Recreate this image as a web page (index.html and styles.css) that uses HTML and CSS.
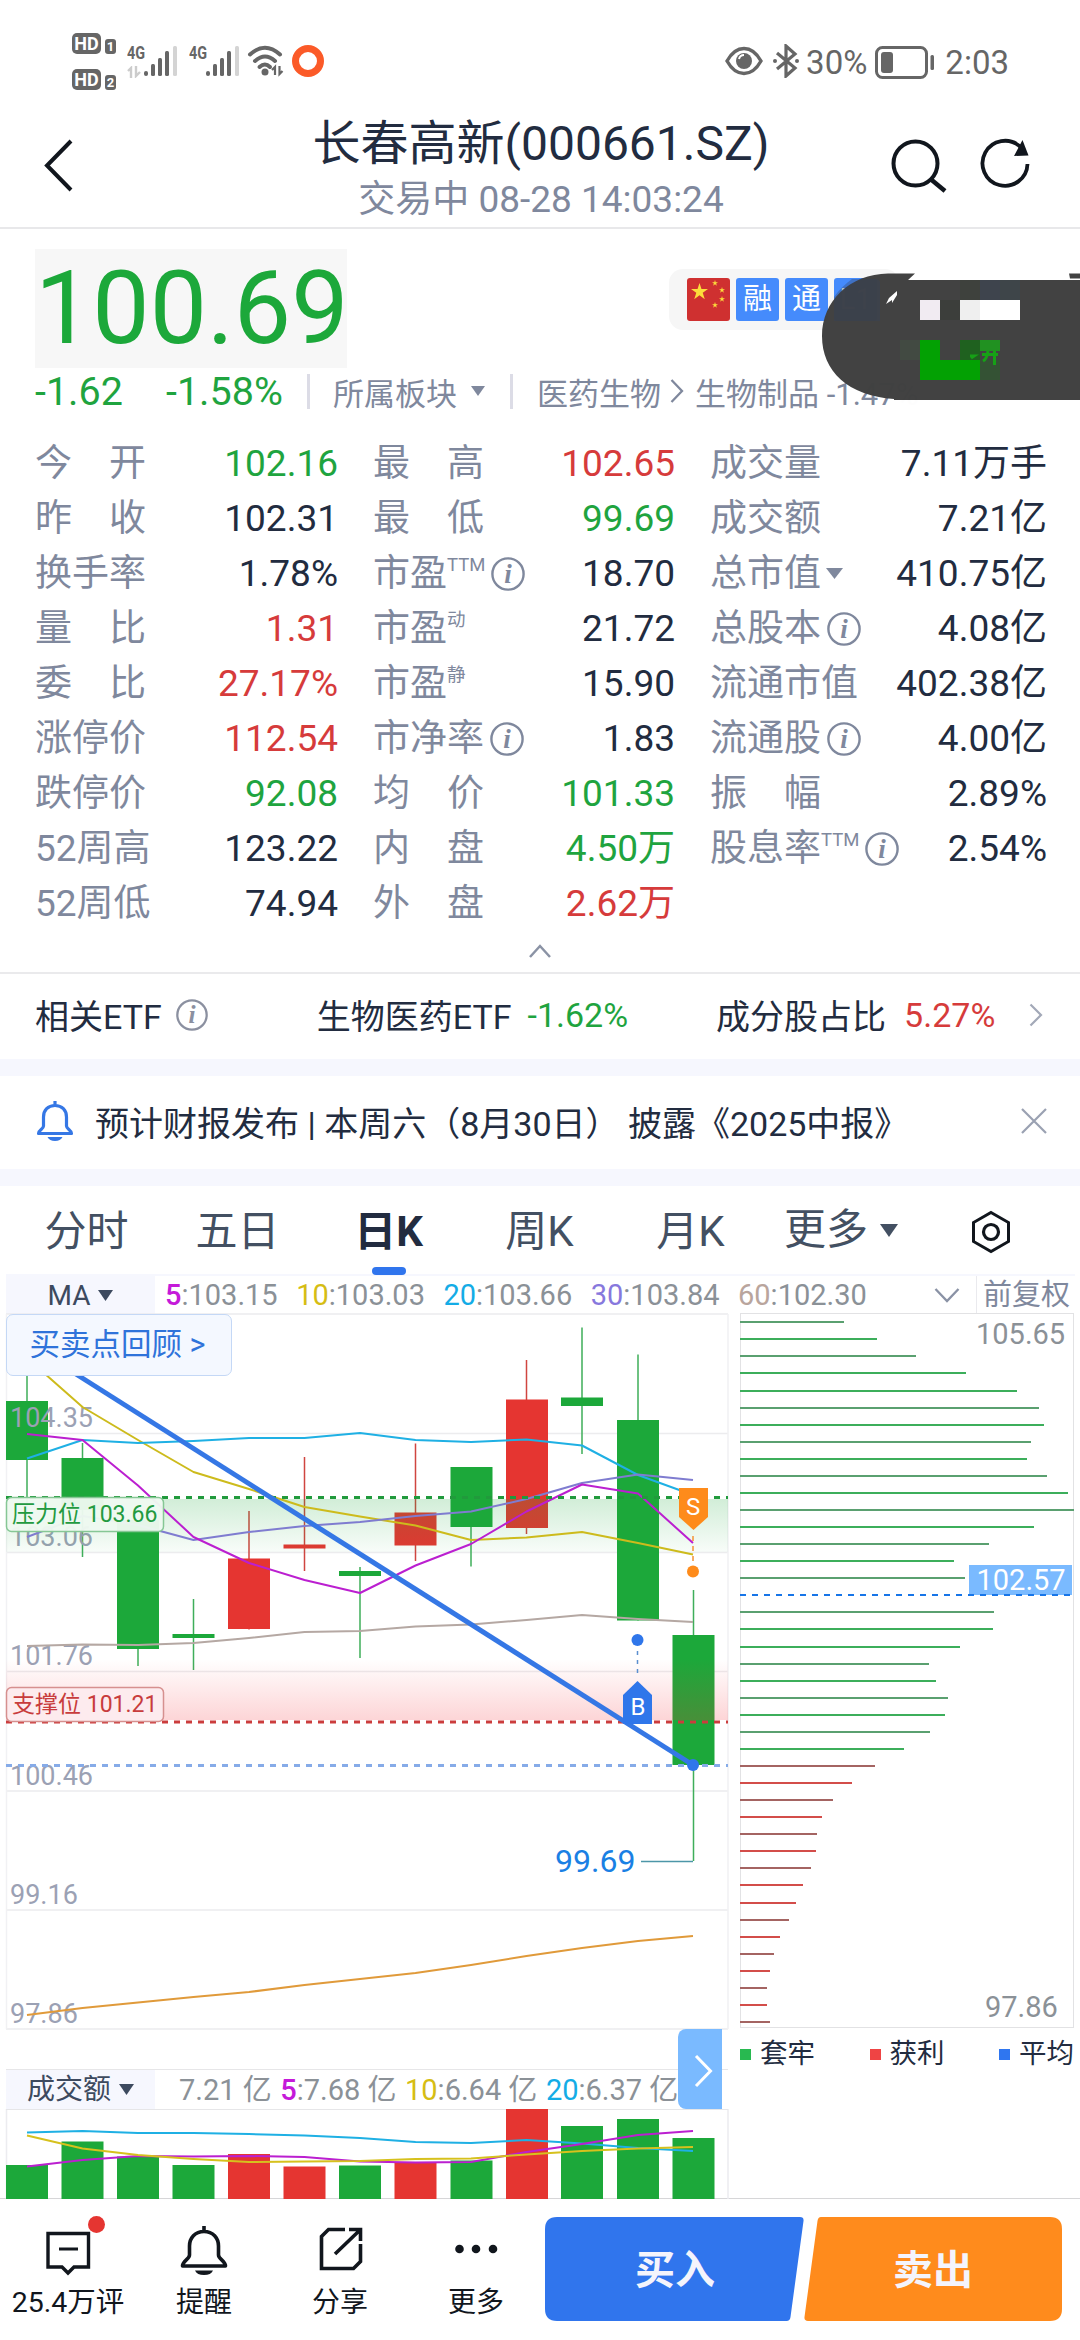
FILE: index.html
```html
<!DOCTYPE html>
<html lang="zh-CN">
<head>
<meta charset="utf-8">
<title>长春高新(000661.SZ)</title>
<link rel="stylesheet" href="styles.css">
</head>
<body>
<svg class="defs" width="0" height="0">
  <symbol id="info" viewBox="0 0 34 34">
    <circle cx="17" cy="17" r="15.6" fill="none" stroke="currentColor" stroke-width="2.4"/>
    <text x="17" y="26" text-anchor="middle" class="info-i">i</text>
  </symbol>
  <symbol id="signal" viewBox="0 0 34 32">
    <g fill="#666">
      <rect x="0" y="25" width="4" height="5" rx="2"/>
      <rect x="7" y="18" width="4" height="12" rx="1.5"/>
      <rect x="14" y="12" width="4" height="18" rx="1.5"/>
      <rect x="21" y="5" width="4" height="25" rx="1.5"/>
      <rect x="29" y="0" width="4" height="30" rx="1.5" fill="#d4d4d4"/>
    </g>
  </symbol>
  <symbol id="star" viewBox="0 0 20 20">
    <path d="M10 0l2.3 7.2H20l-6.2 4.4 2.4 7.4-6.2-4.6L3.8 19l2.4-7.4L0 7.2h7.7z" fill="#fcdc3b"/>
  </symbol>
</svg>

<header>
  <div class="status">
    <div class="status-left">
      <div class="hd">
        <div><b>HD</b><i>1</i></div>
        <div><b>HD</b><i>2</i></div>
      </div>
      <div class="cell"><span>4G</span><svg class="updown" width="14" height="12" viewBox="0 0 14 12"><path d="M4 12V2L1 5M9 0v10l4-4" fill="none" stroke="#ccc" stroke-width="2.4"/></svg><svg width="34" height="32"><use href="#signal"/></svg></div>
      <div class="cell second"><span>4G</span><svg width="34" height="32"><use href="#signal"/></svg></div>
      <svg class="wifi" width="38" height="32" viewBox="0 0 38 32">
        <g fill="none" stroke="#666" stroke-width="4" stroke-linecap="round">
          <path d="M3 9.500Q18 -4 33 9.500"/><path d="M8 16Q18 7 28 16"/><path d="M12.500 22Q18 17 23 22"/>
        </g>
        <circle cx="18" cy="27" r="3.500" fill="#666"/>
        <path d="M28 30v-8l-3 3M32.500 21v8l3-3" fill="none" stroke="#666" stroke-width="2.200"/>
      </svg>
      <svg class="ring" width="32" height="32" viewBox="0 0 32 32"><circle cx="16" cy="16" r="12.500" fill="none" stroke="#fb5a28" stroke-width="7"/></svg>
    </div>
    <div class="status-right">
      <svg width="38" height="32" viewBox="0 0 38 32">
        <path d="M2 16Q9 3.500 19 3.500T36 16Q29 28.500 19 28.500T2 16z" fill="none" stroke="#666" stroke-width="3.400"/>
        <circle cx="19" cy="16" r="8" fill="#666"/><path d="M14 14q1-4 5-4" fill="none" stroke="#fff" stroke-width="2"/>
      </svg>
      <svg class="bt" width="28" height="34" viewBox="0 0 28 34">
        <path d="M5 9l18 15-9 8V2l9 8L5 25" fill="none" stroke="#666" stroke-width="3.200"/><circle cx="3" cy="17" r="2" fill="#666"/><circle cx="25" cy="17" r="2" fill="#666"/>
      </svg>
      <span class="pct">30%</span>
      <svg class="battery" width="60" height="33" viewBox="0 0 60 33">
        <rect x="1.500" y="1.500" width="50" height="30" rx="6" fill="none" stroke="#666" stroke-width="3"/>
        <rect x="6" y="6" width="12" height="21" rx="3" fill="#666"/><rect x="55.500" y="9" width="3.500" height="15" rx="1.500" fill="#666"/>
      </svg>
      <span>2:03</span>
    </div>
  </div>
  <div class="title-bar">
    <svg class="back" width="34" height="56" viewBox="0 0 34 56"><path d="M29 4L5 28.500 29 53" fill="none" stroke="#11161d" stroke-width="4"/></svg>
    <div class="title">
      <h1>长春高新(000661.SZ)</h1>
      <p>交易中 08-28 14:03:24</p>
    </div>
    <div class="tools">
      <svg width="60" height="56" viewBox="0 0 60 56"><circle cx="25.500" cy="25.500" r="22" fill="none" stroke="#11161d" stroke-width="4"/><path d="M40.500 41L55 53" stroke="#11161d" stroke-width="4.500"/></svg>
      <svg width="54" height="56" viewBox="0 0 54 56"><path d="M41 8.500A22.500 22.500 0 1 0 48.500 26" fill="none" stroke="#11161d" stroke-width="3.800"/><path d="M43.500 2L49.500 17.500 35 18z" fill="#11161d"/></svg>
    </div>
  </div>
</header>

<section class="quote">
  <div class="price-row">
    <div class="price">100.69</div>
    <div class="badges">
      <svg width="43" height="43" viewBox="0 0 43 43"><rect width="43" height="43" rx="3" fill="#cf3030"/><use href="#star" x="4" y="5" width="17" height="17"/><use href="#star" x="25" y="2" width="6" height="6"/><use href="#star" x="32" y="9" width="6" height="6"/><use href="#star" x="32" y="18" width="6" height="6"/><use href="#star" x="25" y="24" width="6" height="6"/></svg>
      <span>融</span><span>通</span><span>L1</span>
    </div>
  </div>
  <div class="change-row">
    <span class="chg down">-1.62</span><span class="chg-pct down">-1.58%</span>
    <span class="rule"></span>
    <span class="sector">所属板块</span>
    <svg class="tri" width="14" height="10" viewBox="0 0 14 10"><path d="M0 0h14L7 10z" fill="#7f889d"/></svg>
    <span class="rule"></span>
    <span class="industry">医药生物<svg width="14" height="26" viewBox="0 0 14 26"><path d="M1.500 2l10.500 11L1.500 24" fill="none" stroke="#7f889d" stroke-width="2.300"/></svg>生物制品 -1.47%</span>
  </div>
  <svg class="floating" width="258" height="140" viewBox="822 272 258 140">
    <path d="M889 396h191v16H889z" fill="#fff"/>
    <path d="M915 273.500h-27C850 274 822 301 822 336s26 60 72 63v1h186V280H908z" fill="#404040"/>
    <path d="M1069 273.500h11v5h-10z" fill="#404040"/>
    <path d="M834 297q7-10 18-18h23q4 0 5 3v39h-46z" fill="#33435c" opacity=".35"/>
    <path d="M897 291l-8 7-3 6 6-4 0 3 5-8z" fill="#fff"/>
    <path d="M960 280h20v20h-20z" fill="#3b3e3a"/><path d="M980 280h20v20h-20z" fill="#3b424b"/><path d="M1000 280h20v20h-20z" fill="#3b4347"/>
    <path d="M920 300h20v20h-20z" fill="#f1ebf2"/><path d="M940 300h20v20h-20z" fill="#393b38"/><path d="M960 300h20v20h-20z" fill="#efefef"/><path d="M980 300h40v20h-40z" fill="#fff"/>
    <path d="M900 340h20v20h-20z" fill="#404840"/><path d="M920 340h20v20h40v20h-60z" fill="#00a000"/>
    <path d="M960 340h20v20h-20z" fill="#1c5f1c"/><path d="M980 340h20v11h-20z" fill="#1e901e"/><path d="M980 360h20v20h-20z" fill="#315031"/>
    <path d="M970 356h4l-3 2M982 354.500h16M988 351q-1 8-5 10M994.500 351v14" fill="none" stroke="#13a013" stroke-width="3"/>
  </svg>
</section>

<section class="stats">
  <dl>
    <div><dt class="wide">今开</dt><dd class="down">102.16</dd></div>
    <div><dt class="wide">昨收</dt><dd>102.31</dd></div>
    <div><dt>换手率</dt><dd>1.78%</dd></div>
    <div><dt class="wide">量比</dt><dd class="up">1.31</dd></div>
    <div><dt class="wide">委比</dt><dd class="up">27.17%</dd></div>
    <div><dt>涨停价</dt><dd class="up">112.54</dd></div>
    <div><dt>跌停价</dt><dd class="down">92.08</dd></div>
    <div><dt>52周高</dt><dd>123.22</dd></div>
    <div><dt>52周低</dt><dd>74.94</dd></div>
  </dl>
  <dl>
    <div><dt class="wide">最高</dt><dd class="up">102.65</dd></div>
    <div><dt class="wide">最低</dt><dd class="down">99.69</dd></div>
    <div><dt>市盈<sup>TTM</sup><svg class="info"><use href="#info"/></svg></dt><dd>18.70</dd></div>
    <div><dt>市盈<sup>动</sup></dt><dd>21.72</dd></div>
    <div><dt>市盈<sup>静</sup></dt><dd>15.90</dd></div>
    <div><dt>市净率<svg class="info"><use href="#info"/></svg></dt><dd>1.83</dd></div>
    <div><dt class="wide">均价</dt><dd class="down">101.33</dd></div>
    <div><dt class="wide">内盘</dt><dd class="down">4.50万</dd></div>
    <div><dt class="wide">外盘</dt><dd class="up">2.62万</dd></div>
  </dl>
  <dl>
    <div><dt>成交量</dt><dd>7.11万手</dd></div>
    <div><dt>成交额</dt><dd>7.21亿</dd></div>
    <div><dt>总市值<svg class="cap-tri" width="17" height="11" viewBox="0 0 17 11"><path d="M0 0h17L8.500 11z" fill="#7f889d"/></svg></dt><dd>410.75亿</dd></div>
    <div><dt>总股本<svg class="info"><use href="#info"/></svg></dt><dd>4.08亿</dd></div>
    <div><dt>流通市值</dt><dd>402.38亿</dd></div>
    <div><dt>流通股<svg class="info"><use href="#info"/></svg></dt><dd>4.00亿</dd></div>
    <div><dt class="wide">振幅</dt><dd>2.89%</dd></div>
    <div><dt>股息率<sup>TTM</sup><svg class="info"><use href="#info"/></svg></dt><dd>2.54%</dd></div>
  </dl>
</section>
<div class="collapse"><svg width="24" height="16" viewBox="0 0 24 16"><path d="M2 14L12 3l10 11" fill="none" stroke="#8b93a5" stroke-width="2.500"/></svg></div>

<section class="etf">
  <span>相关ETF</span><svg class="info"><use href="#info"/></svg>
  <span class="etf-name">生物医药ETF</span><span class="etf-chg down">-1.62%</span>
  <span class="weight">成分股占比</span><span class="weight-val up">5.27%</span>
  <svg class="more" width="14" height="26" viewBox="0 0 14 26"><path d="M1.500 2.500L12 13 1.500 23.500" fill="none" stroke="#a3a9b8" stroke-width="2.200"/></svg>
</section>
<section class="notice">
  <svg class="bell" width="38" height="42" viewBox="0 0 38 42"><path d="M19 1v4M19 5.500C12 5.500 7.500 10 7.500 17v9c0 3-5 4-5 7.500h33c0-3.500-5-4.500-5-7.500v-9C30.500 10 26 5.500 19 5.500z" fill="none" stroke="#3577e5" stroke-width="3.200" stroke-linejoin="round"/><path d="M11.500 37h15q-2 4-7.500 4t-7.500-4z" fill="#3577e5"/></svg>
  <span>预计财报发布 | 本周六（8月30日） 披露《2025中报》</span>
  <svg class="close" width="28" height="28" viewBox="0 0 28 28"><path d="M2 2l24 24M26 2L2 26" stroke="#9aa1b2" stroke-width="2.200"/></svg>
</section>

<nav class="tabs">
  <a>分时</a><a>五日</a><a class="active">日K</a><a>周K</a><a>月K</a>
  <a class="more-tab">更多<svg width="18" height="13" viewBox="0 0 18 13"><path d="M0 0h18L9 13z" fill="#435062"/></svg></a>
  <svg class="gear" width="40" height="44" viewBox="0 0 40 44"><path d="M20 2.500L37.500 12.500v19L20 41.500 2.500 31.500v-19z" fill="none" stroke="#11161d" stroke-width="3"/><circle cx="20" cy="22" r="7.500" fill="none" stroke="#11161d" stroke-width="3.200"/></svg>
</nav>

<div class="ma-row">
  <div class="picker">MA<svg width="15" height="11" viewBox="0 0 15 11"><path d="M0 0h15L7.500 11z" fill="#3d4a5f"/></svg></div>
  <div class="ma-values">
    <span><b class="c5">5</b>:103.15</span><span><b class="c10">10</b>:103.03</span><span><b class="c20">20</b>:103.66</span><span><b class="c30">30</b>:103.84</span><span><b class="c60">60</b>:102.30</span>
  </div>
  <svg class="down-arrow" width="26" height="16" viewBox="0 0 26 16"><path d="M1.500 2L13 14 24.500 2" fill="none" stroke="#8a92a5" stroke-width="2.300"/></svg>
  <div class="adjust">前复权</div>
</div>

<div class="charts">
  <div class="chart-main">
    <svg class="kline" width="734" height="756" viewBox="0 1313 734 756">
      <defs>
        <linearGradient id="gBand" x1="0" y1="0" x2="0" y2="1"><stop offset="0" stop-color="#1ca83a" stop-opacity=".2"/><stop offset="1" stop-color="#1ca83a" stop-opacity=".03"/></linearGradient>
        <linearGradient id="rBand" x1="0" y1="0" x2="0" y2="1"><stop offset="0" stop-color="#f52d35" stop-opacity="0"/><stop offset="1" stop-color="#f52d35" stop-opacity=".2"/></linearGradient>
      </defs>
      <g stroke="#ececee" stroke-width="1.500" fill="none">
        <path d="M6 1314h722M6 1433.500h722M6 1552.500h722M6 1671.500h722M6 1791h722M6 1910h722M6 2029h722"/>
        <path d="M6.500 1314v715M728 1314v715" stroke="#f1f1f4"/>
      </g>
      <g stroke-width="1.500" stroke="#3fae5a">
        <path d="M27 1370v145M82.500 1443v114M138 1520v146M193.500 1599v71M360 1567v91M471 1500v66.500M582 1327.500v126.500M638 1354.500v266M693.500 1590v271"/>
        <path d="M249 1511v118.500M304.500 1457v114M415.500 1443.500v117.500M526.500 1360v174" stroke="#d04540"/>
      </g>
      <g fill="#1ca83a">
        <path d="M6 1401h42v59H6zM61.500 1458h42v52h-42zM117 1520h42v129h-42zM172.500 1634h42v4h-42zM339 1571h42v5h-42zM450.500 1467h42v60h-42zM561 1397.500h42v8.500h-42zM617 1420h42v200.500h-42zM672.500 1635h42v130h-42z"/>
        <path d="M228 1558.500h42v70.500h-42zM283.500 1544.500h42v4h-42zM394.500 1512.500h42v33h-42zM506 1399.500h42v128.500h-42z" fill="#e53531"/>
      </g>
      <g class="axis">
        <text x="10" y="1427">104.35</text><text x="10" y="1545.500">103.06</text><text x="10" y="1665">101.76</text><text x="10" y="1784.500">100.46</text><text x="10" y="1903.500">99.16</text><text x="10" y="2022.500">97.86</text>
      </g>
      <rect x="6" y="1499" width="722" height="53" fill="url(#gBand)"/>
      <rect x="6" y="1659" width="722" height="61" fill="url(#rBand)"/>
      <g fill="none" stroke-width="2" stroke-linejoin="round">
        <polyline stroke="#b5a8a3" points="27,1646 82.500,1644.500 138,1645 193.500,1643 249,1638 304.500,1632 360,1631 415.500,1626.500 471,1624.500 526.500,1620 582,1615 638,1619 693,1622"/>
        <polyline stroke="#e09a3a" points="27,2015 82.500,2008 138,2002.500 193.500,1997 249,1992 304.500,1985 360,1979 415.500,1973 471,1965 526.500,1956 582,1948 638,1941 693,1936"/>
        <polyline stroke="#cdbb1c" points="27,1358 82.500,1407 138,1440 193.500,1472 249,1489 304.500,1507 360,1516.500 415.500,1525.500 471,1540 526.500,1537.500 582,1532 638,1543 693,1554.500"/>
        <polyline stroke="#1fb0e4" points="27,1458.500 82.500,1440 138,1443 193.500,1441 249,1438 304.500,1438 360,1433 415.500,1440 471,1442 526.500,1439.500 582,1445.500 638,1475 693,1495"/>
        <polyline stroke="#7f7cd0" points="27,1537 82.500,1516 138,1525 193.500,1540 249,1532 304.500,1526 360,1522 415.500,1516 471,1511.500 526.500,1499 582,1483 638,1474.500 693,1480"/>
        <polyline stroke="#bb1fd0" points="27,1434 82.500,1440 138,1485.500 193.500,1537 249,1563 304.500,1580 360,1593 415.500,1565.500 471,1544 526.500,1511.500 582,1484.500 638,1493.500 693,1543"/>
      </g>
      <g stroke-width="3" stroke-dasharray="6 6">
        <path d="M6 1497.500h722" stroke="#219a3c"/><path d="M6 1722h722" stroke="#cb3d3d"/><path d="M6 1765.500h722" stroke="#86abe8"/>
      </g>
      <path d="M68 1369L693 1765" stroke="#3577e5" stroke-width="5"/>
      <circle cx="693" cy="1765" r="6" fill="#2f76ea"/>
      <path d="M637.500 1651v25" stroke="#5b8fd0" stroke-width="1.500" stroke-dasharray="4 5"/>
      <path d="M693 1536v25" stroke="#f59336" stroke-width="1.500" stroke-dasharray="5 5"/>
      <circle cx="637.500" cy="1640" r="6" fill="#2f76ea"/><circle cx="693" cy="1571.500" r="6" fill="#fe8b1b"/>
      <path d="M623 1724v-29l14.500-14 14.500 14v29z" fill="#2f76ea"/><path d="M679 1488v29l14.500 13 14.500-13v-29z" fill="#fe8b1b"/>
      <text class="mark" x="638" y="1715">B</text><text class="mark" x="693" y="1515">S</text>
      <path d="M641 1861.500h52" stroke="#4d96a8" stroke-width="1.500"/>
      <text class="low" x="555" y="1872">99.69</text>
      <rect x="6.500" y="1497.500" width="157" height="34" rx="5" fill="#eef9f0" fill-opacity=".96" stroke="#86c795" stroke-width="1.500"/>
      <text class="level" x="12" y="1522" fill="#239a40">压力位 103.66</text>
      <rect x="6.500" y="1687.500" width="157" height="34" rx="5" fill="#fdebee" stroke="#d6908f" stroke-width="1.500"/>
      <text class="level" x="12" y="1712" fill="#c83c3c">支撑位 101.21</text>
    </svg>
    <div class="review">买卖点回顾 &gt;</div>
    <div class="expand"><svg width="22" height="34" viewBox="0 0 22 34"><path d="M3 2l14.500 15L3 32" fill="none" stroke="#fff" stroke-width="3"/></svg></div>
    <div class="vol-row">
      <div class="picker">成交额<svg width="15" height="11" viewBox="0 0 15 11"><path d="M0 0h15L7.500 11z" fill="#3d4a5f"/></svg></div>
      <div class="vol-values"><span>7.21 亿</span><span><b class="c5">5</b>:7.68 亿</span><span><b class="c10">10</b>:6.64 亿</span><span><b class="c20">20</b>:6.37 亿</span></div>
    </div>
    <svg class="volume" width="734" height="90" viewBox="0 2109 734 90">
      <path d="M6.500 2109v90M728 2109v90" stroke="#ececf0" stroke-width="1.500"/><path d="M6 2109.500h722" stroke="#e6e6e8"/>
      <path fill="#1ca83a" d="M6 2165h42v34H6zM61.500 2141.500h42v58h-42zM117 2156.500h42v43h-42zM172.500 2165h42v34h-42zM339 2165.500h42v34h-42zM450.500 2160.500h42v39h-42zM561 2126h42v73h-42zM617 2119h42v80h-42zM672.500 2138h42v61h-42z"/>
      <path fill="#e53531" d="M228 2154h42v45h-42zM283.500 2166.500h42v33h-42zM394.500 2162.500h42v37h-42zM506 2109h42v90h-42z"/>
      <g fill="none" stroke-width="2">
        <polyline stroke="#1fb0e4" points="27,2132.500 82.500,2131 138,2133 193.500,2133 249,2134 304.500,2135.500 360,2138 415.500,2142 471,2143 526.500,2140 582,2143.500 638,2148 693,2151"/>
        <polyline stroke="#bb1fd0" points="27,2166.500 82.500,2160 138,2156 193.500,2156.500 249,2156 304.500,2157 360,2161.500 415.500,2162.500 471,2162 526.500,2152 582,2144 638,2135 693,2131"/>
        <polyline stroke="#d6c11d" points="27,2135.500 82.500,2148.500 138,2155 193.500,2159 249,2162 304.500,2161.500 360,2161 415.500,2159 471,2158.500 526.500,2154.500 582,2151 638,2148.500 693,2147"/>
      </g>
    </svg>
  </div>
  <div class="chart-side">
    <svg width="346" height="716" viewBox="734 1313 346 716">
      <rect x="740.500" y="1313.500" width="333" height="714" fill="none" stroke="#e2e2e4"/>
      <g stroke-width="2">
        <path stroke="#5aa070" d="M740 1322h104M740 1356h176M740 1408h299M740 1442h291M740 1476h307M740 1510h334M740 1544h249M740 1578h225M740 1612h254M740 1664h189M740 1698h208M740 1732h190"/>
        <path stroke="#3cae5b" d="M740 1339h137M740 1373h226M740 1391h277M740 1425h304M740 1459h287M740 1493h328M740 1527h294M740 1561h214M740 1629h253M740 1647h220M740 1681h196M740 1715h205M740 1749h164"/>
        <path stroke="#a46462" d="M740 1766h135M740 1800h93M740 1834h77M740 1868h71M740 1920h49M740 1954h34M740 1988h27M740 2022h30"/>
        <path stroke="#d34d4a" d="M740 1783h112M740 1817h82M740 1851h76M740 1885h63M740 1903h56M740 1937h40M740 1971h30M740 2005h27"/>
      </g>
      <rect x="969" y="1565" width="103" height="30" fill="#7abaff"/>
      <path d="M740 1595h333" stroke="#1775e8" stroke-width="2" stroke-dasharray="6 6"/>
      <text class="side-num" x="976" y="1344">105.65</text>
      <text class="side-num light" x="976.500" y="1590">102.57</text>
      <text class="side-num" x="985" y="2017">97.86</text>
    </svg>
    <div class="legend"><span class="lg">套牢</span><span class="lr">获利</span><span class="lb">平均</span></div>
  </div>
</div>

<footer>
  <div class="action">
    <svg width="60" height="56" viewBox="38 2216 60 56"><path d="M48 2229.500h40.500v33.500H74l-6 6-6-6H48z" fill="none" stroke="#11161d" stroke-width="3.400"/><path d="M59 2245h19" stroke="#11161d" stroke-width="3"/></svg>
    <i class="dot"></i><span class="comments">25.4万评</span>
  </div>
  <div class="action">
    <svg width="50" height="56" viewBox="179 2220 50 56"><path d="M204 2226v5M204 2231.500C195 2231.500 189.500 2238 189.500 2246v9c0 4-7 6-7 11h43c0-5-7-7-7-11v-9C218.500 2238 213 2231.500 204 2231.500z" fill="none" stroke="#11161d" stroke-width="3.600" stroke-linejoin="round"/><path d="M195 2270.500h18q-2 4.500-9 4.500t-9-4.500z" fill="#11161d"/></svg>
    <span>提醒</span>
  </div>
  <div class="action">
    <svg width="50" height="56" viewBox="315 2220 50 56"><path d="M345 2229.500h-16.500l-7 7v32h32l7-7V2244M349 2229.500h11.500V2241M360 2230l-25 24" fill="none" stroke="#11161d" stroke-width="3.600"/></svg>
    <span>分享</span>
  </div>
  <div class="action">
    <svg width="50" height="56" viewBox="451 2220 50 56" fill="#11161d"><circle cx="459.500" cy="2249" r="4.300"/><circle cx="476" cy="2249" r="4.300"/><circle cx="493" cy="2249" r="4.300"/></svg>
    <span>更多</span>
  </div>
  <div class="trade">
    <svg width="518" height="104" viewBox="545 2218 518 104"><path d="M557 2218h243q4 0 3.500 4l-13 96q-.5 4-4 4H557q-12 0-12-12v-80q0-12 12-12z" fill="#3075ed"/><path d="M821 2218h229q12 0 12 12v80q0 12-12 12H808q-4 0-3.500-4l13-96q.5-4 3.500-4z" fill="#ff8b1c"/></svg>
    <b class="buy">买入</b><b class="sell">卖出</b>
  </div>
</footer>
</body>
</html>
```
FILE: styles.css
```css
* { box-sizing: border-box; }
body {
  margin: 0;
  width: 1080px;
  height: 2340px;
  overflow: hidden;
  background: #fff;
  color: #222c40;
  font-family: Roboto, "Noto Sans CJK SC", sans-serif;
}
svg { display: block; flex: none; }
.defs { display: none; }
h1, p, dl, dd { margin: 0; }
b { font-weight: 400; }
span, dt, dd { white-space: nowrap; }
.up { color: #d63b3b; }
.down { color: #1fa43f; }
.info { width: 34px; height: 34px; color: #7f889d; }
.info-i { font: italic bold 27px "Liberation Serif", serif; fill: currentColor; }

/* status bar */
.status { height: 92px; display: flex; justify-content: space-between; padding: 32px 71px 0 72px; color: #666; }
.status-left, .status-right { display: flex; align-items: flex-start; }
.hd { display: flex; flex-direction: column; gap: 14px; width: 55px; }
.hd div { display: flex; align-items: flex-end; gap: 4px; height: 22px; }
.hd b { background: #666; color: #fff; font: bold 18px/21px Roboto, sans-serif; width: 29px; text-align: center; border-radius: 5px; }
.hd i { background: #666; color: #fff; font: bold 13px/15px Roboto, sans-serif; width: 11px; text-align: center; border-radius: 3px; }
.cell { width: 49px; height: 46px; display: grid; grid-template-columns: 17px 32px; align-content: end; position: relative; }
.cell span { font: bold 18px/14px Roboto, sans-serif; width: 22px; transform: scaleX(.8); transform-origin: left; }
.cell svg:last-child { grid-column: 2; grid-row: 1 / 3; }
.cell .updown { grid-row: 2; grid-column: 1; align-self: end; }
.cell.second { margin-left: 13px; }
.wifi { margin: 13px 0 0 9px; }
.ring { margin: 13px 0 0 7px; }
.status-right { padding-top: 13px; font-size: 33px; line-height: 36px; }
.bt { margin: -1px 6px 0 9px; }
.battery { margin: 1px 10px 0 8px; }

/* title bar */
.title-bar { height: 137px; border-bottom: 2px solid #e8e8ea; display: grid; grid-template-columns: 1fr auto 1fr; padding: 0 47px 0 42px; }
.back { margin-top: 45px; }
.title { text-align: center; padding: 24px 0 0 7px; }
.title h1 { font-size: 48px; line-height: 56px; font-weight: 400; }
.title p { font-size: 37px; line-height: 44px; margin-top: 6px; color: #7f889d; }
.tools { display: flex; justify-content: flex-end; gap: 29px; padding-top: 46px; }

/* quote */
.quote { position: relative; padding: 20px 0 0 35px; height: 205px; }
.price-row { display: flex; }
.price { width: 312px; height: 119px; background: #f7f7f7; color: #1ca83a; font-size: 102px; line-height: 119px; }
.badges { margin: 20px 0 0 322px; height: 61px; width: 230px; border-radius: 14px; background: #f6f6f6; display: flex; gap: 6px; padding: 9px 18px; }
.badges span { width: 43px; height: 43px; border-radius: 3px; background: #458bfc; color: #fff; font-size: 29px; line-height: 43px; text-align: center; }
.change-row { display: flex; align-items: center; height: 46px; color: #7f889d; font-size: 31px; }
.chg, .chg-pct { font-size: 39.500px; }
.chg { width: 131px; }
.chg-pct { width: 141px; }
.rule { width: 3px; height: 35px; background: #dcdce6; }
.sector { margin-left: 23px; }
.tri { margin: 0 25px 0 14px; }
.industry { display: flex; align-items: center; gap: 12px; margin-left: 24px; }
.industry svg { margin-right: -1px; margin-left: -3px; }
.floating { position: absolute; left: 822px; top: 43px; opacity: .985; }

/* statistics */
.stats { height: 495px; display: grid; grid-template-columns: 303px 302px 337px; gap: 35px; padding: 2px 0 0 35px; font-size: 37px; line-height: 55px; }
.stats dl > div { height: 55px; display: flex; justify-content: space-between; }
.stats dt { display: flex; align-items: center; color: #7f889d; }
.stats .wide { letter-spacing: 37px; }
.stats sup { font-size: 18.500px; line-height: 20px; align-self: flex-start; margin-top: 9px; }
.stats .info { margin-left: 6px; }
.cap-tri { margin-left: 5px; }
.collapse { height: 45px; border-bottom: 2px solid #eaeaec; display: flex; justify-content: center; padding-top: 14px; }

.etf { height: 85px; display: flex; align-items: center; padding: 0 0 4px 35px; font-size: 34px; }
.etf .info { width: 32px; height: 32px; margin-left: 14px; color: #8b90a0; }
.etf-name { margin-left: 109px; }
.etf-chg { margin-left: 16px; }
.weight { margin-left: 88px; }
.weight-val { margin-left: 18px; }
.more { margin-left: 34px; }
.notice { height: 127px; border: solid #f6f7fe; border-width: 17px 0; display: flex; align-items: center; font-size: 34px; padding: 0 32px 3px 36px; }
.notice .bell { margin-right: 21px; }
.close { margin-left: auto; }

/* period tabs */
.tabs { height: 88px; display: flex; align-items: center; font-size: 42px; color: #435062; padding-left: 11px; }
.tabs a { width: 151px; height: 88px; line-height: 92px; text-align: center; }
.tabs .active { font-weight: 700; color: #222c40; position: relative; }
.tabs .active::after { content: ""; position: absolute; left: 59px; bottom: -1px; width: 34px; height: 8px; border-radius: 4px; background: #3075ed; }
.tabs .more-tab { display: flex; align-items: center; justify-content: flex-start; gap: 12px; padding-left: 18px; width: 205px; }
.gear { margin-top: 3px; }

.picker { width: 149px; background: #f6f7fe; color: #3d4a5f; display: flex; align-items: center; justify-content: center; gap: 8px; font-size: 28px; }
.ma-row { height: 40px; margin: 0 5px 0 6px; display: flex; font-size: 29px; line-height: 39px; color: #8b9197; border-top: 2px solid #f6f7fe; }
.ma-values { display: flex; width: 779px; padding-left: 10px; }
.ma-values span { margin-right: 18.500px; }
.c5 { color: #c51ad9; font-weight: 500; }
.c10 { color: #d6bd14; }
.c20 { color: #14ace6; }
.c30 { color: #8778dd; }
.c60 { color: #b9a59d; }
.down-arrow { margin-top: 11px; }
.adjust { margin-left: 16px; border-left: 1px solid #eaeaee; padding-left: 6px; font-size: 29px; color: #7f889d; }

/* charts */
.charts { display: flex; height: 886px; margin-top: -1px; border-bottom: 1px solid #d6d6d8; }
.chart-main { width: 734px; position: relative; }
.axis { font-size: 27px; fill: #9ba1b4; }
.mark { font-size: 24px; fill: #fff; text-anchor: middle; }
.low { font-size: 32px; fill: #1a80e4; }
.level { font-size: 23px; }
.review { position: absolute; left: 6px; top: 1px; width: 226px; height: 62px; border: 1px solid #c4d8f6; border-radius: 7px; background: #f4f8ff; color: #2f73da; font-size: 30.500px; line-height: 60px; padding-left: 22.500px; }
.expand { position: absolute; left: 678px; top: 716px; width: 44px; height: 80px; background: #7abaff; border-radius: 8px 0 0 8px; padding: 25px 0 0 15px; }
.vol-row { height: 40px; display: flex; margin-left: 6px; width: 722px; border-top: 1px solid #e6e6e8; color: #8b9197; font-size: 29px; line-height: 40px; }
.vol-values { display: flex; gap: 8.500px; padding-left: 24px; }
.side-num { font-size: 29px; fill: #8b9197; }
.side-num.light { fill: #fff; }
.legend { display: flex; padding: 1px 0 0 6px; font-size: 27.500px; line-height: 48px; }
.legend span { display: flex; align-items: center; gap: 9px; width: 129.500px; }
.legend span::before { content: ""; width: 11px; height: 11px; background: #28b950; }
.legend .lr::before { background: #ef4444; }
.legend .lb::before { background: #2f76f0; }
.legend .lb { width: 80px; }

/* bottom actions */
footer { display: flex; height: 141px; }
.action { width: 136px; display: flex; flex-direction: column; align-items: center; padding-top: 21px; position: relative; font-size: 28px; line-height: 40px; color: #11161d; }
.action span { margin-top: 7px; }
.action .comments { font-size: 28.500px; }
.dot { position: absolute; left: 88px; top: 17px; width: 17px; height: 17px; border-radius: 50%; background: #e53531; }
.trade { position: relative; margin: 18px 0 0 1px; height: 104px; color: #f4f4fc; font-size: 40px; line-height: 107px; }
.trade b { position: absolute; top: 0; font-weight: 700; }
.buy { left: 90px; }
.sell { left: 348px; }
```
